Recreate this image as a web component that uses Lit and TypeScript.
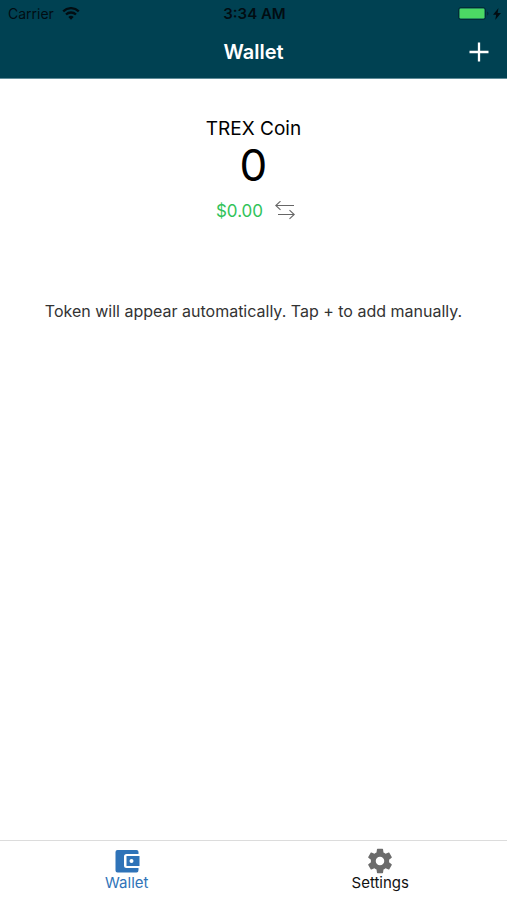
import { LitElement, html, css } from "lit";
import { customElement, state } from "lit/decorators.js";

@customElement("app-root")
export class AppRoot extends LitElement {
  static styles = css`
    :host {
      display: flex;
      flex-direction: column;
      min-height: 100vh;
      background: #fff;
      color: #000;
      font-family: Inter, Roboto, "Liberation Sans", sans-serif;
    }
    * {
      box-sizing: border-box;
    }
    h1, h2, p {
      margin: 0;
      font-weight: 400;
    }
    svg {
      display: block;
    }
    button {
      margin: 0;
      padding: 0;
      border: 0;
      background: none;
      color: inherit;
      font: inherit;
      cursor: pointer;
    }
    .header {
      background: #004152;
      padding-bottom: 2px;
      border-bottom: 1px solid #5f8b98;
    }
    .row {
      display: grid;
      grid-template-columns: 1fr auto 1fr;
      align-items: center;
    }
    .status {
      height: 28px;
      padding: 0 6px 0 8px;
      color: #020d12;
      font-size: 14px;
      line-height: 20px;
    }
    .carrier {
      display: flex;
      align-items: center;
      gap: 8px;
    }
    .time {
      font-size: 15px;
      font-weight: 600;
    }
    .power {
      display: flex;
      align-items: center;
      justify-content: flex-end;
      gap: 4px;
    }
    .nav {
      height: 48px;
      padding: 0 16px;
      color: #fff;
    }
    .title {
      grid-column: 2;
      font-size: 20px;
      line-height: 24px;
      font-weight: 600;
    }
    .add {
      justify-self: end;
    }
    .main {
      flex: 1;
      display: flex;
      flex-direction: column;
      align-items: center;
      padding: 38px 16px;
      text-align: center;
    }
    .coin {
      font-size: 19px;
      line-height: 24px;
    }
    .amount {
      font-size: 44px;
      line-height: 48px;
    }
    .fiat {
      display: flex;
      align-items: center;
      gap: 12px;
      margin: 10px 0 76px;
      padding-left: 4px;
      color: #32c35a;
      font-size: 17px;
      line-height: 24px;
    }
    .swap {
      color: #666;
    }
    .hint {
      color: #333;
      font-size: 16px;
      line-height: 24px;
    }
    .tabs {
      display: grid;
      grid-template-columns: 1fr 1fr;
      height: 60px;
      border-top: 1px solid #dcdcdc;
    }
    .tab {
      display: flex;
      flex-direction: column;
      align-items: center;
      padding-top: 6px;
      font-size: 15px;
      line-height: 16px;
      text-decoration: none;
      color: #111;
    }
    .tab svg {
      color: #6b6b6b;
    }
    .tab.active,
    .tab.active svg {
      color: #2f73b8;
    }
  `;

  @state() private tab = "wallet";

  private select(e: Event, tab: string) {
    e.preventDefault();
    this.tab = tab;
  }

  render() {
    return html`
      <header class="header">
        <div class="row status">
          <span class="carrier">
            Carrier
            <svg width="18" height="14" viewBox="0 0 18 14" fill="none" stroke="currentColor" stroke-width="2.3" aria-hidden="true">
              <path d="M1.200 4.300a11.200 11.200 0 0 1 15.600 0M4 7.500a7.200 7.200 0 0 1 10 0" />
              <path d="M9 12.800 6.300 10a3.900 3.900 0 0 1 5.400 0z" fill="currentColor" stroke="none" />
            </svg>
          </span>
          <span class="time">3:34 AM</span>
          <span class="power">
            <svg width="31" height="14" viewBox="0 0 31 14" aria-hidden="true">
              <rect x=".5" y=".5" width="27" height="12" rx="2.500" fill="none" stroke="#032b37" />
              <rect x="1.500" y="1.500" width="25" height="10" rx="1.200" fill="#4cd964" />
              <path d="M29 4.500q1.500.5 1.500 2t-1.500 2z" fill="#032b37" />
            </svg>
            <svg width="8" height="12" viewBox="0 0 8 12" fill="currentColor" aria-hidden="true">
              <path d="M5.500 0 0 6.800h3.200L2.200 12 8 5H4.600z" />
            </svg>
          </span>
        </div>
        <div class="row nav">
          <h1 class="title">Wallet</h1>
          <button class="add" aria-label="Add token">
            <svg width="24" height="24" viewBox="0 0 24 24" fill="none" stroke="currentColor" stroke-width="2.300" aria-hidden="true">
              <path d="M2.500 12h19M12 2.500v19" />
            </svg>
          </button>
        </div>
      </header>
      <main class="main">
        <h2 class="coin">TREX Coin</h2>
        <p class="amount">0</p>
        <div class="fiat">
          <span>$0.00</span>
          <button class="swap" aria-label="Switch currency">
            <svg width="20" height="20" viewBox="0 0 20 20" fill="none" stroke="currentColor" stroke-width="1.100" aria-hidden="true">
              <path d="M19 4.500H.8M5.500.2.8 4.500l4.700 4.300M3 13.500h16.200M14.500 9.200l4.700 4.300-4.700 4.300" />
            </svg>
          </button>
        </div>
        <p class="hint">Token will appear automatically. Tap + to add manually.</p>
      </main>
      <nav class="tabs">
        <a class="tab ${this.tab === "wallet" ? "active" : ""}" href="#wallet" @click=${(e: Event) => this.select(e, "wallet")}>
          <svg width="28" height="28" viewBox="0 0 28 28" fill="currentColor" fill-rule="evenodd" aria-hidden="true">
            <path d="M4.500 3h19Q25.500 3 25.500 5v2H13.500Q11 7 11 9.500v9Q11 21 13.500 21h12v2q0 2.500-2 2.500h-19Q2.500 25.500 2.500 23.500V5Q2.500 3 4.500 3z" />
            <path d="M13.500 9H26.500v10h-13zM18.500 12q-2 0-2 2t2 2 2-2-2-2z" />
          </svg>
          Wallet
        </a>
        <a class="tab ${this.tab === "settings" ? "active" : ""}" href="#settings" @click=${(e: Event) => this.select(e, "settings")}>
          <svg width="28" height="28" viewBox=".5 .5 23 23" fill="currentColor" aria-hidden="true">
            <path d="M19.430 12.980c.04-.32.07-.64.07-.98s-.03-.66-.07-.98l2.110-1.650c.19-.15.24-.42.12-.64l-2-3.460c-.12-.22-.39-.3-.61-.22l-2.490 1c-.52-.4-1.080-.73-1.690-.98l-.38-2.650C14.460 2.180 14.250 2 14 2h-4c-.25 0-.46.18-.49.42l-.38 2.650c-.61.25-1.170.59-1.690.98l-2.490-1c-.23-.09-.49 0-.61.22l-2 3.460c-.13.22-.07.49.12.64l2.110 1.650c-.04.32-.07.65-.07.98s.03.66.07.98l-2.110 1.650c-.19.15-.24.42-.12.64l2 3.460c.12.22.39.3.61.22l2.490-1c.52.4 1.080.73 1.690.98l.38 2.650c.03.24.24.42.49.42h4c.25 0 .46-.18.49-.42l.38-2.650c.61-.25 1.170-.59 1.690-.98l2.490 1c.23.09.49 0 .61-.22l2-3.460c.12-.22.07-.49-.12-.64l-2.110-1.650zM12 15.500c-1.930 0-3.500-1.570-3.500-3.500s1.570-3.500 3.500-3.500 3.500 1.570 3.500 3.500-1.570 3.500-3.500 3.500z" />
          </svg>
          Settings
        </a>
      </nav>
    `;
  }
}
